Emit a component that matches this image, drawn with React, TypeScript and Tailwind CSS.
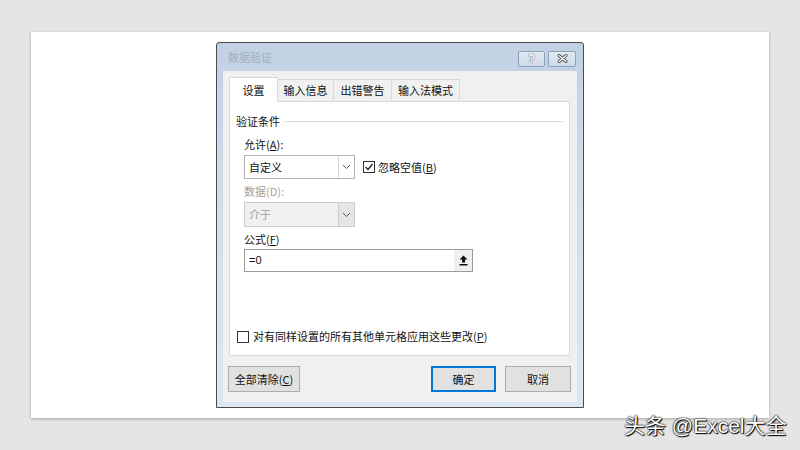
import React from 'react'

const cjk = "font-['Microsoft_YaHei','Noto_Sans_CJK_SC',sans-serif]"

function Chevron() {
  return (
    <svg width="9" height="6" viewBox="0 0 9 6" className="text-[#606060]">
      <path d="M1 1 L4.5 4.5 L8 1" fill="none" stroke="currentColor" strokeWidth="1" />
    </svg>
  )
}

function Check({ checked }: { checked?: boolean }) {
  return (
    <div className="w-[12px] h-[12px] border border-[#333] bg-white flex items-center justify-center shrink-0">
      {checked && (
        <svg width="10" height="10" viewBox="0 0 10 10">
          <path d="M1.5 5 L4 7.5 L8.5 2" fill="none" stroke="#222" strokeWidth="1.3" />
        </svg>
      )}
    </div>
  )
}

function Combo({ value, disabled }: { value: string; disabled?: boolean }) {
  return (
    <div
      className={`w-[111px] flex border ${
        disabled ? 'h-[25px] bg-[#f0f0f0] border-[#cccccc] text-[#a0a0a0]' : 'h-[24px] bg-white border-[#b4b4b4] text-[#111]'
      }`}
    >
      <div className="flex-1 flex items-center pl-[4px]">{value}</div>
      <div
        className={`w-[16px] flex items-center justify-center border-l ${
          disabled ? 'bg-[#e5e5e5] border-[#cccccc]' : 'bg-white border-[#d4d4d4]'
        }`}
      >
        <Chevron />
      </div>
    </div>
  )
}

function TitleButton({ children }: { children: React.ReactNode }) {
  return (
    <div className="h-[16px] flex items-center justify-center rounded-[2px] border border-[#8ea2b7] bg-gradient-to-b from-[#e3ebf4] to-[#cbd9e8]">
      {children}
    </div>
  )
}

function Button({ label, focused, w }: { label: React.ReactNode; focused?: boolean; w: string }) {
  return (
    <div
      className={`${w} h-[26px] flex items-center justify-center bg-[#e1e1e1] border ${
        focused ? 'border-[#0078d7] shadow-[inset_0_0_0_1px_#0078d7]' : 'border-[#adadad]'
      } text-[#111]`}
    >
      {label}
    </div>
  )
}

export default function App() {
  return (
    <div className={`relative w-[800px] h-[450px] bg-[#e5e5e5] pt-[32px] pl-[31px] ${cjk} text-[11px] leading-none`}>
      {/* slide */}
      <div className="w-[738px] h-[386px] bg-white shadow-[0_1px_3px_rgba(0,0,0,0.28)] pt-[10px] pl-[185px]">
        {/* dialog */}
        <div className="w-[368px] h-[366px] border border-[#4a4a4a] rounded-t-[3px] bg-gradient-to-b from-[#c0d1e3] via-[#d3e0ee] to-[#dce7f3] flex flex-col">
          {/* title bar */}
          <div className="h-[28px] flex items-center justify-between pl-[11px] pr-[7px]">
            <span className="text-[#a3afbc] text-[11px]">数据验证</span>
            <div className="flex gap-[3px] mt-[3px]">
              <div className="w-[27px]">
                <TitleButton>
                  <span className="text-[12px] font-bold text-white [text-shadow:0_0_1px_#555,0_0_1px_#555] font-['Liberation_Sans',sans-serif]">?</span>
                </TitleButton>
              </div>
              <div className="w-[28px]">
                <TitleButton>
                  <svg width="11" height="9" viewBox="0 0 11 9">
                    <path d="M2 1.5 L9 7.5 M9 1.5 L2 7.5" stroke="#555" strokeWidth="3" strokeLinecap="round" />
                    <path d="M2 1.5 L9 7.5 M9 1.5 L2 7.5" stroke="#fff" strokeWidth="1.2" strokeLinecap="round" />
                  </svg>
                </TitleButton>
              </div>
            </div>
          </div>

          {/* client area */}
          <div className="flex-1 mx-[6px] mb-[5px] bg-[#f0f0f0] px-[6px] pt-[6px] flex flex-col">
            {/* tabs */}
            <div className="flex items-end h-[24px]">
              <div className="w-[49px] h-[25px] bg-white border border-b-0 border-[#d9d9d9] flex items-center justify-center text-[#111] relative z-10 -mb-px">
                设置
              </div>
              <div className="w-[56px] h-[22px] bg-[#f0f0f0] border border-l-0 border-b-0 border-[#d9d9d9] flex items-center justify-center text-[#111]">
                输入信息
              </div>
              <div className="w-[58px] h-[22px] bg-[#f0f0f0] border border-l-0 border-b-0 border-[#d9d9d9] flex items-center justify-center text-[#111]">
                出错警告
              </div>
              <div className="w-[68px] h-[22px] bg-[#f0f0f0] border border-l-0 border-b-0 border-[#d9d9d9] flex items-center justify-center text-[#111]">
                输入法模式
              </div>
            </div>

            {/* panel */}
            <div className="w-[341px] h-[255px] bg-white border border-[#d9d9d9] flex flex-col pl-[14px] text-[#111]">
              <div className="mt-[10px] h-[18px] flex items-center -ml-[8px] mr-[6px] gap-[5px]">
                <span>验证条件</span>
                <div className="flex-1 h-px bg-[#dcdcdc]" />
              </div>

              <div className="mt-[5px] h-[18px] flex items-center">
                允许(<span className="underline">A</span>):
              </div>
              <div className="mt-[2px] flex items-center">
                <Combo value="自定义" />
                <div className="ml-[8px] flex items-center gap-[3px]">
                  <Check checked />
                  <span>
                    忽略空值(<span className="underline">B</span>)
                  </span>
                </div>
              </div>

              <div className="mt-[3px] h-[18px] flex items-center text-[#a0a0a0]">数据(D):</div>
              <div className="mt-[2px]">
                <Combo value="介于" disabled />
              </div>

              <div className="mt-[3px] h-[18px] flex items-center">
                公式(<span className="underline">F</span>)
              </div>
              <div className="mt-[1px] w-[229px] h-[23px] bg-white border border-[#9a9a9a] flex">
                <div className="flex-1 flex items-center pl-[4px] font-['Liberation_Sans',sans-serif]">=0</div>
                <div className="w-[18px] bg-[#f0f0f0] flex items-center justify-center">
                  <svg width="9" height="11" viewBox="0 0 9 11">
                    <path d="M4.5 0.5 L8.5 4.5 L6 4.5 L6 7.5 L3 7.5 L3 4.5 L0.5 4.5 Z" fill="#111" />
                    <rect x="0.5" y="9" width="8" height="1.5" fill="#111" />
                  </svg>
                </div>
              </div>

              <div className="mt-[56px] h-[17px] flex items-center gap-[4px] -ml-[7px]">
                <Check />
                <span>
                  对有同样设置的所有其他单元格应用这些更改(<span className="underline">P</span>)
                </span>
              </div>
            </div>

            {/* buttons */}
            <div className="mt-[10px] flex items-center -ml-[1px]">
              <Button
                w="w-[72px]"
                label={
                  <span>
                    全部清除(<span className="underline">C</span>)
                  </span>
                }
              />
              <div className="flex-1" />
              <Button w="w-[65px]" focused label="确定" />
              <div className="w-[9px]" />
              <Button w="w-[66px]" label="取消" />
            </div>
          </div>
        </div>
      </div>

      {/* watermark */}
      <div className="absolute left-[624px] top-[415px] text-[21px] text-white leading-none font-['Liberation_Sans','Noto_Sans_CJK_SC',sans-serif] [text-shadow:0_0_1px_#000,0_0_2px_#000,1px_1px_1px_#000]">
        头条 @Excel大全
      </div>
    </div>
  )
}
